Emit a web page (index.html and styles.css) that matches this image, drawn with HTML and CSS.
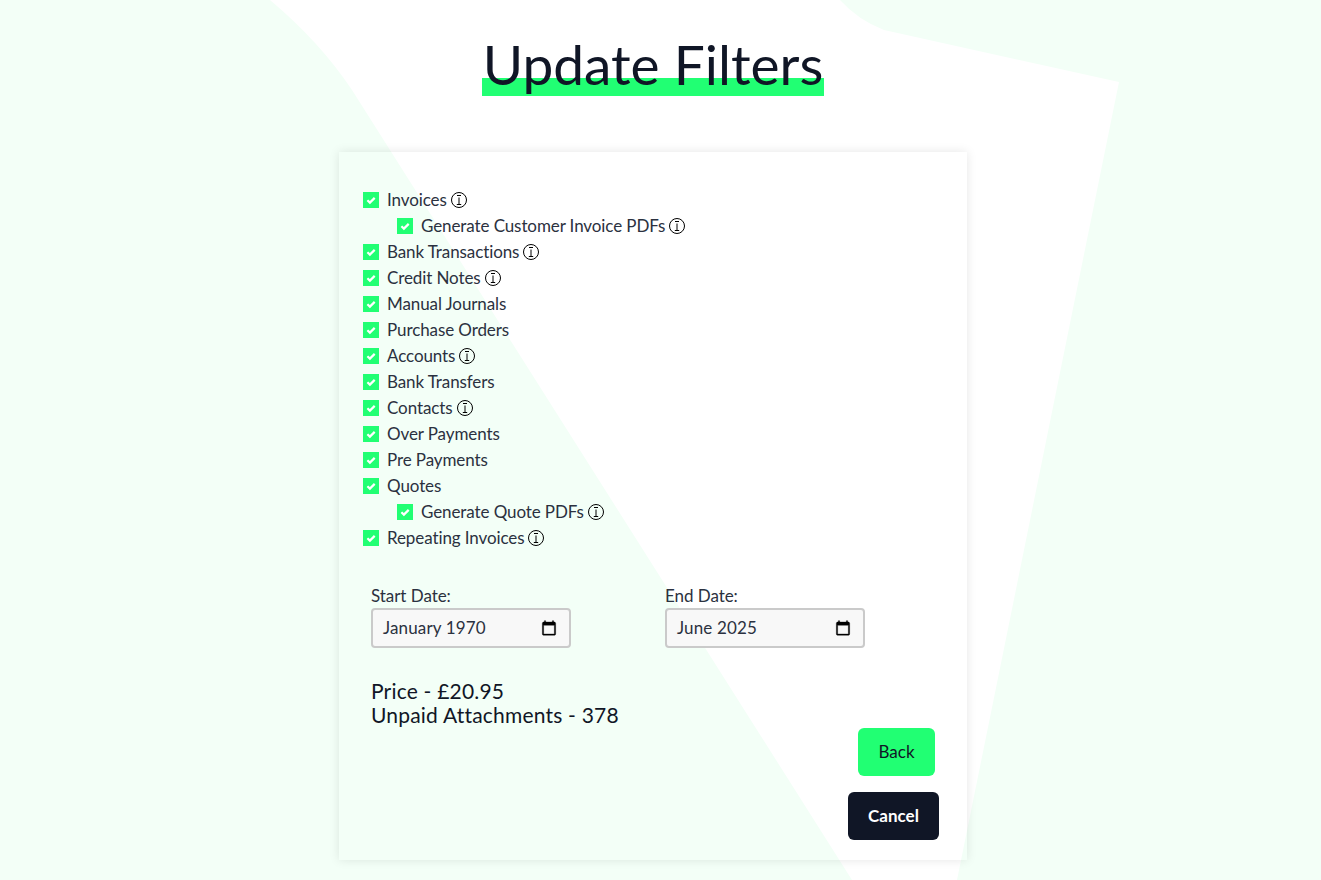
FILE: index.html
```html
<!DOCTYPE html>
<html lang="en">
<head>
<meta charset="utf-8">
<title>Update Filters</title>
<link rel="stylesheet" href="styles.css">
</head>
<body>
<svg class="bg" viewBox="0 0 1321 880" preserveAspectRatio="none" aria-hidden="true">
  <path class="bg-white" d="M270 0 Q320 42 352 90 L852 880 L957 880 L1119 82 L884 30 Q858 20 840 0 Z"/>
</svg>
<main class="page">
  <h1 class="title"><span class="title-text">Update Filters</span></h1>
  <section class="card">
    <ul class="checks">
      <li class="check"><span class="box"><svg viewBox="0 0 16 16"><path d="M4.4 8.2 6.9 10.6 11.7 5.9"/></svg></span>Invoices<svg class="info" viewBox="0 0 16 16"><circle cx="8" cy="8" r="7.5"/><path d="M6 3.5h4M8 5.5v7M5.8 12.5h4.4"/></svg></li>
      <li class="check sub"><span class="box"><svg viewBox="0 0 16 16"><path d="M4.4 8.2 6.9 10.6 11.7 5.9"/></svg></span>Generate Customer Invoice PDFs<svg class="info" viewBox="0 0 16 16"><circle cx="8" cy="8" r="7.5"/><path d="M6 3.5h4M8 5.5v7M5.8 12.5h4.4"/></svg></li>
      <li class="check"><span class="box"><svg viewBox="0 0 16 16"><path d="M4.4 8.2 6.9 10.6 11.7 5.9"/></svg></span>Bank Transactions<svg class="info" viewBox="0 0 16 16"><circle cx="8" cy="8" r="7.5"/><path d="M6 3.5h4M8 5.5v7M5.8 12.5h4.4"/></svg></li>
      <li class="check"><span class="box"><svg viewBox="0 0 16 16"><path d="M4.4 8.2 6.9 10.6 11.7 5.9"/></svg></span>Credit Notes<svg class="info" viewBox="0 0 16 16"><circle cx="8" cy="8" r="7.5"/><path d="M6 3.5h4M8 5.5v7M5.8 12.5h4.4"/></svg></li>
      <li class="check"><span class="box"><svg viewBox="0 0 16 16"><path d="M4.4 8.2 6.9 10.6 11.7 5.9"/></svg></span>Manual Journals</li>
      <li class="check"><span class="box"><svg viewBox="0 0 16 16"><path d="M4.4 8.2 6.9 10.6 11.7 5.9"/></svg></span>Purchase Orders</li>
      <li class="check"><span class="box"><svg viewBox="0 0 16 16"><path d="M4.4 8.2 6.9 10.6 11.7 5.9"/></svg></span>Accounts<svg class="info" viewBox="0 0 16 16"><circle cx="8" cy="8" r="7.5"/><path d="M6 3.5h4M8 5.5v7M5.8 12.5h4.4"/></svg></li>
      <li class="check"><span class="box"><svg viewBox="0 0 16 16"><path d="M4.4 8.2 6.9 10.6 11.7 5.9"/></svg></span>Bank Transfers</li>
      <li class="check"><span class="box"><svg viewBox="0 0 16 16"><path d="M4.4 8.2 6.9 10.6 11.7 5.9"/></svg></span>Contacts<svg class="info" viewBox="0 0 16 16"><circle cx="8" cy="8" r="7.5"/><path d="M6 3.5h4M8 5.5v7M5.8 12.5h4.4"/></svg></li>
      <li class="check"><span class="box"><svg viewBox="0 0 16 16"><path d="M4.4 8.2 6.9 10.6 11.7 5.9"/></svg></span>Over Payments</li>
      <li class="check"><span class="box"><svg viewBox="0 0 16 16"><path d="M4.4 8.2 6.9 10.6 11.7 5.9"/></svg></span>Pre Payments</li>
      <li class="check"><span class="box"><svg viewBox="0 0 16 16"><path d="M4.4 8.2 6.9 10.6 11.7 5.9"/></svg></span>Quotes</li>
      <li class="check sub"><span class="box"><svg viewBox="0 0 16 16"><path d="M4.4 8.2 6.9 10.6 11.7 5.9"/></svg></span>Generate Quote PDFs<svg class="info" viewBox="0 0 16 16"><circle cx="8" cy="8" r="7.5"/><path d="M6 3.5h4M8 5.5v7M5.8 12.5h4.4"/></svg></li>
      <li class="check"><span class="box"><svg viewBox="0 0 16 16"><path d="M4.4 8.2 6.9 10.6 11.7 5.9"/></svg></span>Repeating Invoices<svg class="info" viewBox="0 0 16 16"><circle cx="8" cy="8" r="7.5"/><path d="M6 3.5h4M8 5.5v7M5.8 12.5h4.4"/></svg></li>
    </ul>
    <div class="dates">
      <div class="date"><span>Start Date:</span><div class="date-input"><span>January 1970</span><svg class="cal" viewBox="0 0 24 24"><path d="M20 3h-1V1h-2v2H7V1H5v2H4c-1.1 0-2 .9-2 2v16c0 1.1.9 2 2 2h16c1.1 0 2-.9 2-2V5c0-1.1-.9-2-2-2zm0 18H4V8h16v13z"/></svg></div></div>
      <div class="date"><span>End Date:</span><div class="date-input"><span>June 2025</span><svg class="cal" viewBox="0 0 24 24"><path d="M20 3h-1V1h-2v2H7V1H5v2H4c-1.1 0-2 .9-2 2v16c0 1.1.9 2 2 2h16c1.1 0 2-.9 2-2V5c0-1.1-.9-2-2-2zm0 18H4V8h16v13z"/></svg></div></div>
    </div>
    <div class="summary">
      <div>Price - £20.95</div>
      <div>Unpaid Attachments - 378</div>
    </div>
    <div class="actions">
      <button class="btn btn-back" type="button">Back</button>
      <button class="btn btn-cancel" type="button">Cancel</button>
    </div>
  </section>
</main>
</body>
</html>
```
FILE: styles.css
```css
* { box-sizing: border-box; }
html, body { margin: 0; height: 880px; overflow: hidden; }
body {
  background: #f3fff7;
  color: #101626;
  font-family: Lato, "Noto Sans", sans-serif;
  position: relative;
}
.bg { position: absolute; left: 0; top: 0; width: 1321px; height: 880px; }
.bg-white { fill: #ffffff; }
.page { position: relative; display: flex; flex-direction: column; align-items: center; padding: 32px 15px 0 0; }
.title { margin: 0; font-size: 55px; font-weight: 400; line-height: 64px; height: 120px; }
.title-text {
  display: inline-block;
  height: 64px;
  padding: 0 1px;
  background: linear-gradient(#21ff73, #21ff73) left 46px / 100% 18px no-repeat;
}
.card {
  width: 628px;
  height: 708px;
  padding: 35px 24px 20px;
  box-shadow: 0 0 10px rgba(0, 0, 0, 0.1);
}
.checks { list-style: none; margin: 0; padding: 0; }
.check {
  display: flex;
  align-items: flex-start;
  height: 26px;
  font-size: 17px;
  line-height: 25px;
  letter-spacing: -0.1px;
  color: #2b3140;
}
.check.sub { padding-left: 34px; }
.box { width: 16px; height: 16px; margin: 5px 8px 0 0; background: #21ff73; display: block; flex: none; }
.box svg { display: block; width: 16px; height: 16px; fill: none; stroke: #fff; stroke-width: 2.2; }
.info { width: 16px; height: 16px; margin: 5px 0 0 4px; fill: none; stroke: #000; stroke-width: 1; flex: none; }
.dates { display: flex; gap: 94px; margin: 33px 0 0 8px; }
.date { display: flex; flex-direction: column; width: 200px; font-size: 17px; line-height: 24px; letter-spacing: -0.05px; color: #2b3140; }
.date-input {
  display: flex;
  align-items: center;
  justify-content: space-between;
  width: 200px;
  height: 40px;
  padding: 0 12px 0 10px;
  border: 2px solid #cacaca;
  border-radius: 4px;
  background: #f8f8f8;
  color: #2b3140;
  letter-spacing: 0.15px;
}
.cal { width: 16px; height: 16px; fill: #000; stroke: #000; stroke-width: 0.5; flex: none; }
.summary { margin: 31px 0 0 8px; font-size: 21px; line-height: 24px; letter-spacing: 0.2px; color: #101626; }
.actions { display: flex; flex-direction: column; align-items: flex-end; gap: 16px; margin: 1px 4px 0 0; }
.btn { height: 48px; border: 0; border-radius: 6px; padding: 0 0 2px; font: 17px Lato, "Noto Sans", sans-serif; }
.btn-back { width: 77px; margin-right: 4px; background: #21ff73; color: #101626; }
.btn-cancel { width: 91px; background: #101626; color: #fff; font-weight: 700; }
```
